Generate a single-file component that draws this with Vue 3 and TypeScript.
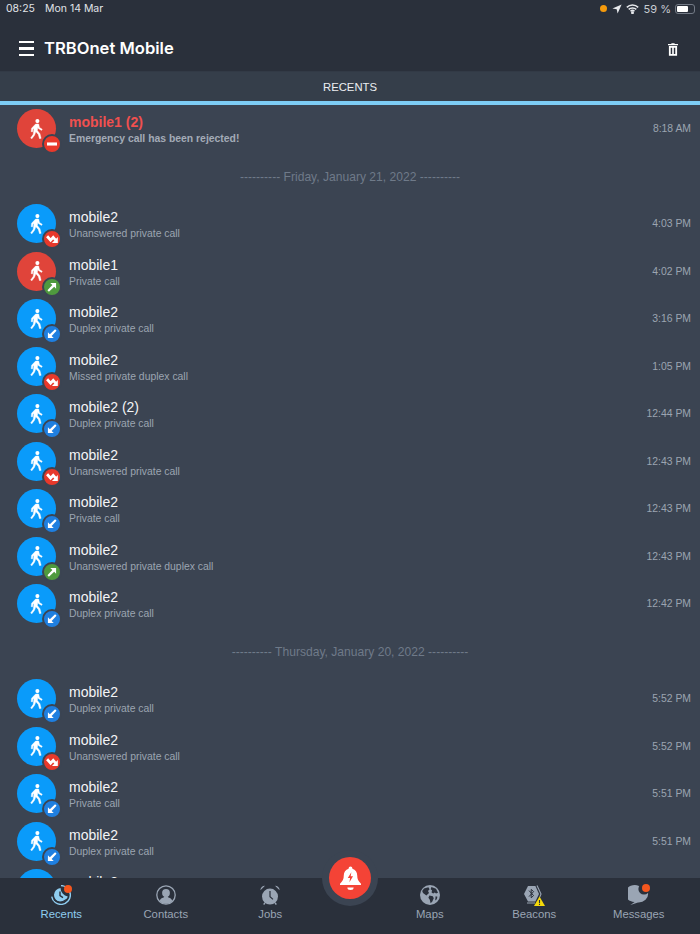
<script setup lang="ts">
type Badge = "reject" | "missed" | "out" | "in";

interface Row {
  kind: "call";
  name: string;
  sub: string;
  time: string;
  badge: Badge;
  red?: boolean;
  alert?: boolean;
}
interface Sep {
  kind: "sep";
  label: string;
}

const call = (name: string, sub: string, time: string, badge: Badge, red = false): Row => ({
  kind: "call",
  name,
  sub,
  time,
  badge,
  red,
});

const items: (Row | Sep)[] = [
  { ...call("mobile1 (2)", "Emergency call has been rejected!", "8:18 AM", "reject", true), alert: true },
  { kind: "sep", label: "---------- Friday, January 21, 2022 ----------" },
  call("mobile2", "Unanswered private call", "4:03 PM", "missed"),
  call("mobile1", "Private call", "4:02 PM", "out", true),
  call("mobile2", "Duplex private call", "3:16 PM", "in"),
  call("mobile2", "Missed private duplex call", "1:05 PM", "missed"),
  call("mobile2 (2)", "Duplex private call", "12:44 PM", "in"),
  call("mobile2", "Unanswered private call", "12:43 PM", "missed"),
  call("mobile2", "Private call", "12:43 PM", "in"),
  call("mobile2", "Unanswered private duplex call", "12:43 PM", "out"),
  call("mobile2", "Duplex private call", "12:42 PM", "in"),
  { kind: "sep", label: "---------- Thursday, January 20, 2022 ----------" },
  call("mobile2", "Duplex private call", "5:52 PM", "in"),
  call("mobile2", "Unanswered private call", "5:52 PM", "missed"),
  call("mobile2", "Private call", "5:51 PM", "in"),
  call("mobile2", "Duplex private call", "5:51 PM", "in"),
  call("mobile2", "Private call", "5:50 PM", "in"),
];
</script>

<template>
  <div class="page">
    <header class="header">
      <div class="status">
        <span class="clock">08:25</span>
        <span>Mon 14 Mar</span>
        <span class="status-right">
          <i class="dot"></i>
          <svg width="10" height="10" viewBox="0 0 10 10"><path d="M9.6.4 5.6 9.6 4.7 5.3.4 4.4z" fill="#e6e8ec" /></svg>
          <svg width="13" height="10" viewBox="0 0 13 10" fill="none" stroke="#e6e8ec" stroke-width="1.5">
            <path d="M.8 3.4a8.2 8.2 0 0 1 11.4 0M2.7 5.4a5.5 5.5 0 0 1 7.6 0M4.5 7.3a3 3 0 0 1 4 0" />
            <circle cx="6.5" cy="8.8" r=".7" fill="#e6e8ec" />
          </svg>
          <span class="pct">59 %</span>
          <span class="battery"><b></b></span>
        </span>
      </div>
      <div class="titlebar">
        <span class="burger"><i></i><i></i><i></i></span>
        <h1>TRBOnet Mobile</h1>
        <svg class="trash" width="10" height="13" viewBox="0 0 11 14">
          <path d="M3.7 1V.2h3.6V1H11v1.2H0V1z" fill="#fff" />
          <path fill-rule="evenodd" d="M1 3.2h9V14H1zM3 5v7h1.6V5zm3.4 0v7H8V5z" fill="#fff" />
        </svg>
      </div>
    </header>

    <div class="strip">RECENTS</div>
    <div class="accent"></div>

    <main class="list">
      <template v-for="(item, i) in items" :key="i">
        <div v-if="item.kind === 'sep'" class="sep">{{ item.label }}</div>
        <div v-else class="row">
          <div class="avatar" :class="{ red: item.red }">
            <svg class="walker" width="13" height="20" viewBox="0 0 15 24.6">
              <circle cx="8.6" cy="2.6" r="2.5" fill="#fff" />
              <path d="M6.4 6.2h3.8l1 4.2 3.4 2.2-.9 1.4-4-2.4-.5-1.4-.6 4 3.2 4 1.4 5.6-2 .4-1.5-5.2-3-3.4-1.6 4.4L1.8 24.4.3 23.4l3.2-4.6.9-7.2-1.3 1-.4 3.2-1.7-.2.4-4.2z" fill="#fff" stroke="#fff" stroke-width=".5" />
            </svg>
            <span class="badge" :class="item.badge">
              <svg v-if="item.badge === 'reject'" width="10" height="4" viewBox="0 0 11 4"><rect width="11" height="3.4" y=".3" fill="#fff" /></svg>
              <svg v-else-if="item.badge === 'missed'" width="12" height="10" viewBox="0 0 13 10" fill="none" stroke="#fff" stroke-width="3">
                <path d="M1.2 2 5 6.2 7.8 3.2 10.4 6.2" />
                <path d="M12.8 2.8v6.4H6.4z" fill="#fff" stroke="none" />
              </svg>
              <svg v-else-if="item.badge === 'out'" width="10" height="10" viewBox="0 0 11 11">
                <path d="M3.6 1h6.4v6.4L7.9 5.3 2.1 10.6.5 9l5.4-5.7z" fill="#fff" />
              </svg>
              <svg v-else width="10" height="10" viewBox="0 0 11 11">
                <path d="M7.4 10H1V3.6l2.1 2.1L8.9.4 10.5 2 5.1 7.7z" fill="#fff" />
              </svg>
            </span>
          </div>
          <div class="text">
            <div class="name" :class="{ alert: item.alert }">{{ item.name }}</div>
            <div class="sub" :class="{ alert: item.alert }">{{ item.sub }}</div>
          </div>
          <div class="time">{{ item.time }}</div>
        </div>
      </template>
    </main>

    <nav class="tabs">
      <div class="tab active">
        <span class="ico">
          <svg width="20" height="20" viewBox="0 0 20 20" fill="none">
            <path d="M10 .6a9.4 9.4 0 1 1-9.3 11" stroke="#8fcdf0" stroke-width="1.4" />
            <path d="M9.5 3a7 7 0 1 0 7.3 8.6 9 9 0 0 1-7.3-8.6z" fill="#8fcdf0" />
            <path d="M9 6.5v4.2l3 2" stroke="#2a303b" stroke-width="1.4" />
            <path d="M3 14.5c3 3 8 3.5 13.4-.5" stroke="#2a303b" stroke-width="1.2" />
          </svg>
          <i class="notif n1"></i>
        </span>
        <span>Recents</span>
      </div>
      <div class="tab">
        <span class="ico">
          <svg width="20" height="20" viewBox="0 0 20 20">
            <circle cx="10" cy="10" r="9.2" fill="none" stroke="#9aa5b4" stroke-width="1.3" />
            <circle cx="10" cy="8" r="3.9" fill="#9aa5b4" />
            <path d="M3.4 16c1-2.6 3.2-3.4 4.6-3.8v-1h4v1c1.4.4 3.6 1.2 4.6 3.8A8.6 8.6 0 0 1 10 18.8 8.6 8.6 0 0 1 3.4 16z" fill="#9aa5b4" />
          </svg>
        </span>
        <span>Contacts</span>
      </div>
      <div class="tab">
        <span class="ico">
          <svg width="20" height="21" viewBox="0 0 20 21">
            <circle cx="10" cy="11.6" r="8" fill="#9aa5b4" />
            <path d="M.4 5.2A4.4 4.4 0 0 1 5 .7zM19.6 5.2A4.4 4.4 0 0 0 15 .7z" fill="#9aa5b4" />
            <path d="M3.6 19.5 5 18M16.4 19.5 15 18" stroke="#9aa5b4" stroke-width="1.4" />
            <path d="M10 6v5.8l3 2.6" fill="none" stroke="#2a303b" stroke-width="1.2" />
          </svg>
        </span>
        <span>Jobs</span>
      </div>
      <div class="gap"></div>
      <div class="tab">
        <span class="ico">
          <svg width="20" height="20" viewBox="0 0 20 20">
            <circle cx="10" cy="10" r="10" fill="#9aa5b4" />
            <path d="M4 3.6 8.4 2.2 9.6 4.2 8 6 9 8 6.4 10.6 3 8 2.2 6zM11.4 2l4.6 1.8 2 4-2 .8-1.2-1-1.6 1-1.6-1.2.4-2.2-1.4-1zM9.4 10.6l3.4.6 1 2-1.6 3.6-1.6 1.4-.8-3.4-1.4-2zM15.6 11.2l1.8.6-.6 2.4-1.6 1.2z" fill="#2a303b" />
          </svg>
        </span>
        <span>Maps</span>
      </div>
      <div class="tab">
        <span class="ico">
          <svg width="22" height="21" viewBox="0 0 22 21">
            <path d="M5 1h7.4l3.6 8-3.6 7.4H5L1 9z" fill="#9aa5b4" />
            <path d="m6 5.6 4.6 5-2.4 2.2V4.4l2.4 2.2-4.6 5" fill="none" stroke="#2a303b" stroke-width="1" />
            <path d="M14 .4 18 9l-1.2 3M4 18h8" fill="none" stroke="#9aa5b4" stroke-width="1.1" />
            <path d="M16.5 11.5 22 21H11z" fill="#f5d90a" />
            <path d="M16.5 15v3M16.5 18.8v1.2" stroke="#2a303b" stroke-width="1.1" />
          </svg>
        </span>
        <span>Beacons</span>
      </div>
      <div class="tab">
        <span class="ico">
          <svg width="21" height="20" viewBox="0 0 21 20">
            <path d="M11 1a9.5 8.4 0 1 0-4.4 15.9L2.4 20 10 17.4A9.5 8.4 0 0 0 20 8z" fill="#9aa5b4" />
            <circle cx="16" cy="4" r="5.6" fill="#2a303b" />
          </svg>
          <i class="notif n2"></i>
        </span>
        <span>Messages</span>
      </div>
      <div class="alarm">
        <svg width="21" height="25" viewBox="0 0 20 23">
          <path d="M10 0a1.8 1.8 0 0 1 1.8 1.8v.5c3 .8 4.6 3.4 4.6 6.4 0 3.4 1 5.4 3.6 7.8v1.2H0v-1.2c2.6-2.4 3.6-4.4 3.6-7.8 0-3 1.6-5.6 4.6-6.4v-.5A1.8 1.8 0 0 1 10 0z" fill="#fff" />
          <path d="M10.8 5.6 7.4 11h2.2l-.6 4 3.4-5.6h-2.2z" fill="#f44336" />
          <path d="M7 20h6a3 2.4 0 0 1-6 0z" fill="#fff" />
        </svg>
      </div>
    </nav>
  </div>
</template>

<style>
html,
body {
  margin: 0;
  background: #3b4452;
}
</style>

<style scoped>
.page {
  width: 700px;
  height: 934px;
  display: flex;
  flex-direction: column;
  overflow: hidden;
  background: #3b4452;
  font-family: "Liberation Sans", Arial, sans-serif;
  color: #fff;
}

.header {
  height: 72px;
  flex: none;
  box-sizing: border-box;
  background: #2a303b;
  border-bottom: 1px solid #323a46;
}
.status {
  height: 17px;
  display: flex;
  align-items: center;
  gap: 10px;
  padding: 0 5px 0 6px;
  font-family: Inter, sans-serif;
  font-size: 10.5px;
  color: #e0e3e8;
}
.status-right {
  margin-left: auto;
  display: flex;
  align-items: center;
  gap: 4px;
}
.dot {
  width: 7px;
  height: 7px;
  border-radius: 50%;
  background: #f59a0c;
  margin-right: 1px;
}
.pct {
  font-size: 11px;
  color: #c8ccd3;
  margin-left: 1px;
}
.battery {
  position: relative;
  width: 20px;
  height: 10px;
  box-sizing: border-box;
  border: 1px solid #737a86;
  border-radius: 3px;
  padding: 1px;
  display: block;
}
.battery b {
  display: block;
  width: 11px;
  height: 6px;
  background: #fff;
  border-radius: 1px;
}
.titlebar {
  height: 54px;
  box-sizing: border-box;
  display: flex;
  align-items: center;
  padding: 7px 22px 0 19px;
}
.burger {
  width: 15px;
  display: flex;
  flex-direction: column;
  gap: 4px;
  margin: 2px 10px 0 0;
}
.burger i {
  display: block;
  height: 2.2px;
  background: #fff;
}
.trash {
  margin-top: 3px;
}
h1 {
  margin: 0;
  font-family: Inter, sans-serif;
  font-size: 16.6px;
  font-weight: 600;
  flex: 1;
}

.strip {
  height: 29px;
  flex: none;
  background: #353e4a;
  display: flex;
  align-items: center;
  justify-content: center;
  font-size: 11.3px;
  color: #eceef1;
}
.accent {
  height: 4px;
  flex: none;
  background: #7dcdf5;
}

.list {
  flex: 1;
  min-height: 0;
  overflow: hidden;
}
.row {
  height: 47.5px;
  display: flex;
  align-items: center;
  padding: 0 9px 0 17px;
}
.sep {
  height: 47.5px;
  box-sizing: border-box;
  padding-top: 1px;
  display: flex;
  align-items: center;
  justify-content: center;
  font-size: 12.1px;
  color: #6f7a89;
}
.avatar {
  position: relative;
  width: 39px;
  height: 39px;
  flex: none;
  border-radius: 50%;
  background: #0a9bfa;
  display: flex;
  align-items: center;
  justify-content: center;
}
.avatar.red {
  background: #e0443a;
}
.badge {
  position: absolute;
  left: 25px;
  top: 25px;
  width: 16px;
  height: 16px;
  border-radius: 50%;
  border: 2px solid #3b4452;
  display: flex;
  align-items: center;
  justify-content: center;
}
.badge.reject,
.badge.missed {
  background: #e8392b;
}
.badge.out {
  background: #4f9a3e;
}
.badge.in {
  background: #1f7fe0;
}
.text {
  margin-left: 13px;
  flex: 1;
  margin-top: 2px;
}
.name {
  font-size: 14px;
  line-height: 18px;
  color: #f4f5f7;
}
.name.alert {
  color: #f0504f;
  font-weight: 700;
}
.sub {
  font-size: 10.4px;
  line-height: 15px;
  color: #9ba4b1;
}
.sub.alert {
  font-weight: 700;
  color: #a3abb7;
}
.time {
  font-size: 10.4px;
  color: #9ba4b1;
}

.tabs {
  position: relative;
  height: 56px;
  flex: none;
  display: grid;
  grid-template-columns: repeat(3, 104.5px) 55px repeat(3, 104.5px);
  padding: 0 9px;
  background: #2a303b;
}
.tab {
  display: flex;
  flex-direction: column;
  align-items: center;
  padding-top: 6px;
  font-size: 11.3px;
  line-height: 14px;
  color: #9aa5b4;
}
.tab.active {
  color: #8fcdf0;
}
.ico {
  position: relative;
  height: 22px;
  display: flex;
  align-items: center;
  margin-bottom: 1px;
}
.notif {
  position: absolute;
  width: 8px;
  height: 8px;
  border-radius: 50%;
  background: #f4561e;
}
.n1 {
  right: -1px;
  top: 1px;
}
.n2 {
  right: -1px;
  top: 0;
}
.alarm {
  position: absolute;
  left: 329px;
  top: -21px;
  width: 42px;
  height: 42px;
  border-radius: 50%;
  background: #f44336;
  box-shadow: 0 0 0 7px #3b4452;
  display: flex;
  align-items: center;
  justify-content: center;
}
</style>
